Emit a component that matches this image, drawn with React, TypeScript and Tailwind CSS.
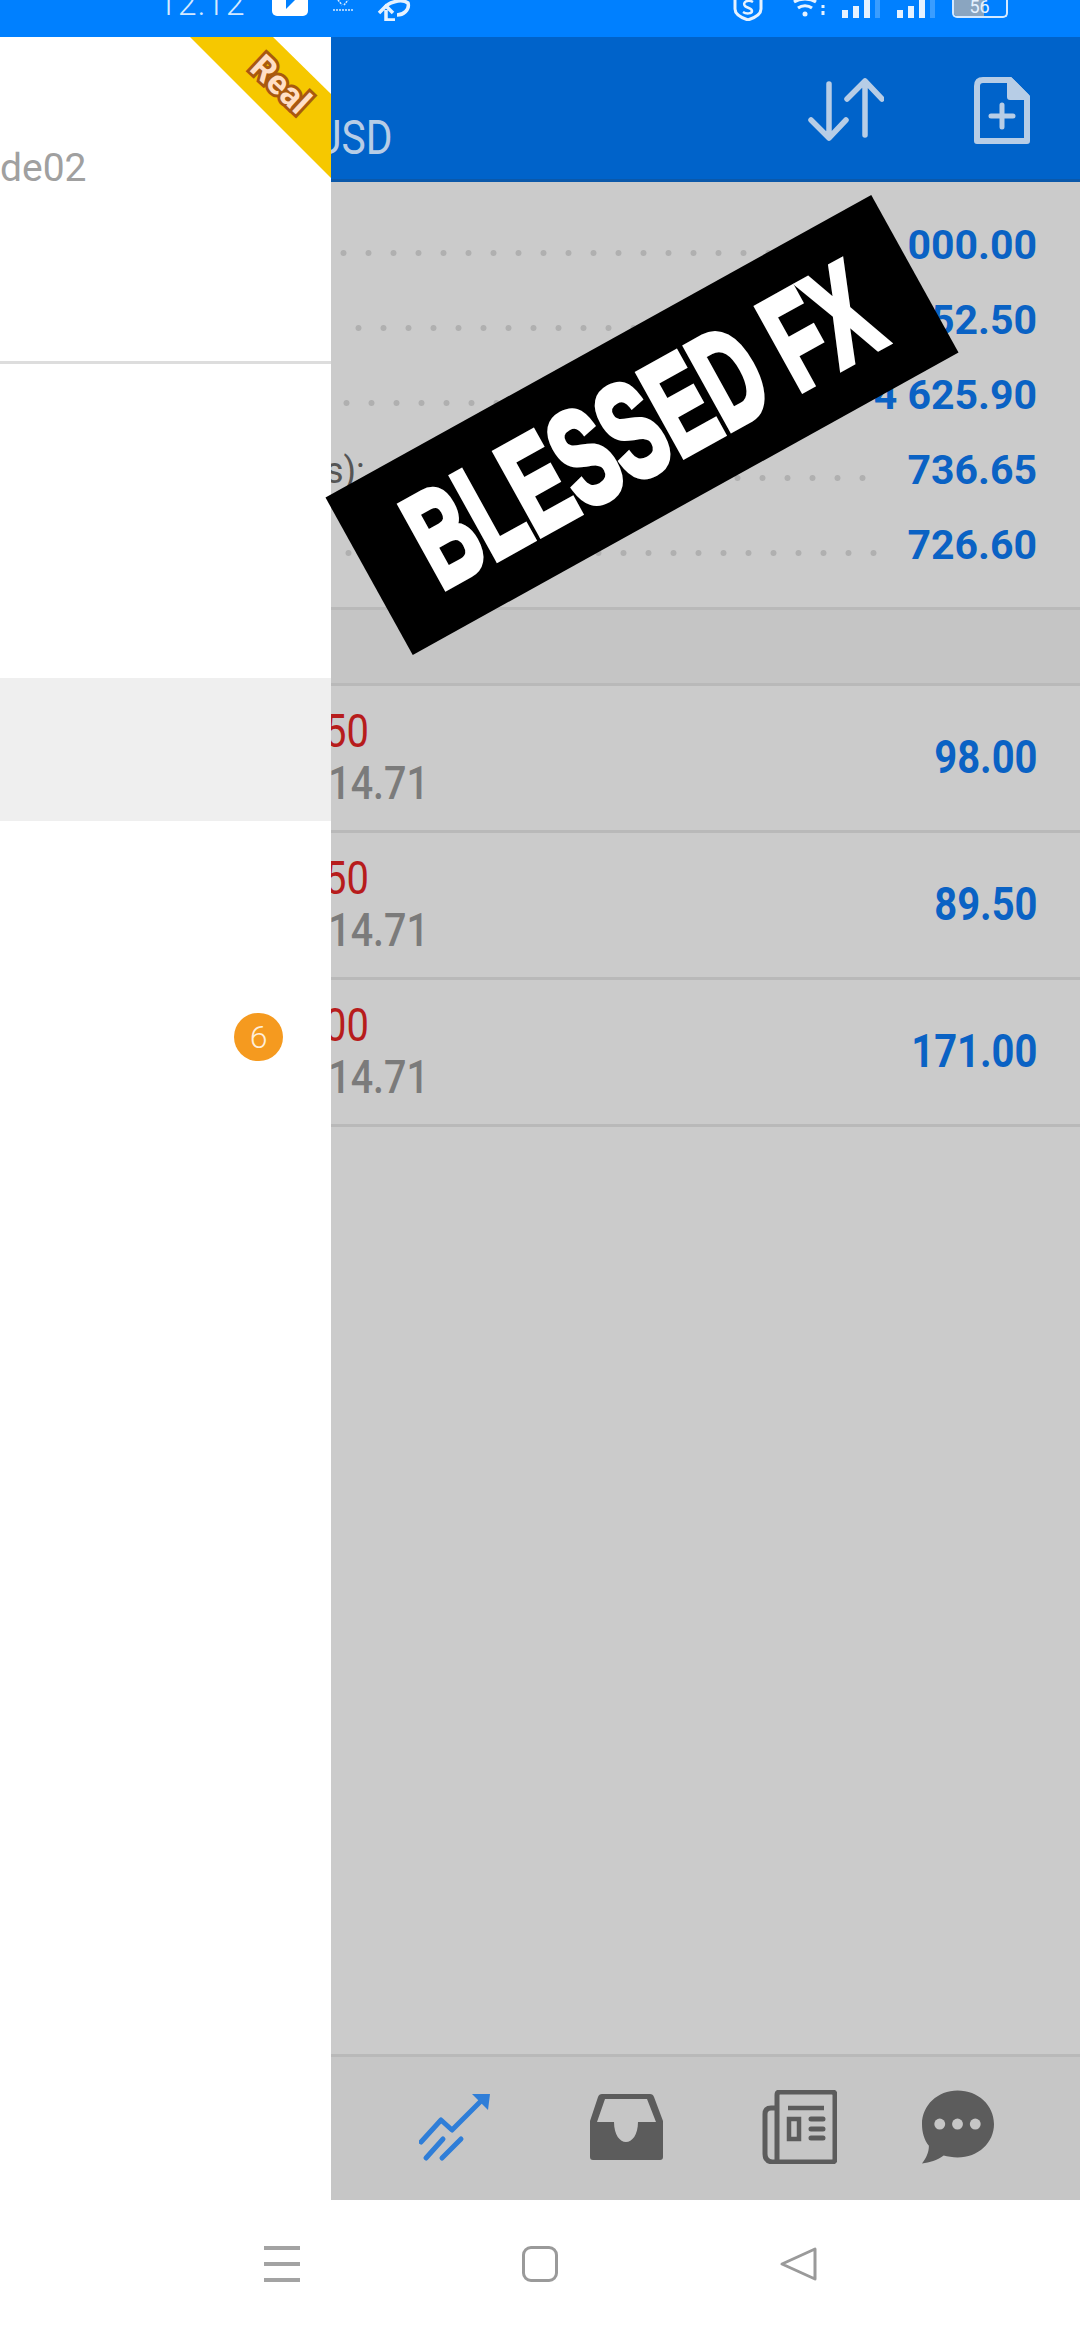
import React from 'react';

// summary rows, the left part of each sits under the drawer
const summary = [
  { value: '000.00', label: '', dots: 'ml-[0px] mr-[20px]' },
  { value: '52.50', label: '', dots: 'ml-[15px] mr-[20px]' },
  { value: '4 625.90', label: '', dots: 'ml-[3px] mr-[20px]' },
  { value: '736.65', label: 's):', dots: 'ml-[10px] mr-[40px]' },
  { value: '726.60', label: '', dots: 'ml-[5px] mr-[28px]' },
];

const positions = [
  { price: '50', value: '98.00' },
  { price: '50', value: '89.50' },
  { price: '00', value: '171.00' },
];

const StatusBar = () => (
  <div className="flex h-[37px] items-start overflow-hidden bg-[#0080ff] pl-[158px] text-[#d4e9ff]">
    <span className="-mt-[14px] text-[34px] leading-[34px] font-light tracking-[1px]">12:12</span>
    <svg className="ml-[26px]" width="36" height="16" viewBox="0 0 36 16">
      <rect x="0" y="-12" width="36" height="28" rx="5" fill="#fff" />
      <path d="M14 0 L23 0 L14 9 Z" fill="#0080ff" />
    </svg>
    <svg className="ml-[22px]" width="26" height="13" viewBox="0 0 26 13" fill="none" stroke="#d4e9ff" strokeWidth="1.5">
      <path d="M8 0 L12 5 M14 5 L18 0 M3 10 H23" strokeDasharray="2 1" />
    </svg>
    <svg className="ml-[21px]" width="34" height="21" viewBox="0 0 34 21" fill="none" stroke="#e6f2ff" strokeWidth="3.5">
      <path d="M8 8 C10 3 24 -2 31 3 C33 10 26 15 20 15" />
      <path d="M2 13 L9 6 L16 13 M9 10 V20 H18" />
    </svg>
    <svg className="ml-[322px]" width="30" height="21" viewBox="0 0 30 21" fill="none" stroke="#e6f2ff" strokeWidth="3">
      <path d="M2 0 V9 C2 14 9 18 15 20 C21 18 28 14 28 9 V0" />
      <path d="M20 2 C15 -1 9 2 12 6 C14 8 19 8 19 11 C19 14 13 14 10 12" strokeWidth="2.5" />
    </svg>
    <svg className="ml-[29px]" width="34" height="18" viewBox="0 0 34 18" fill="none" stroke="#e6f2ff" strokeWidth="3">
      <path d="M2 2 C8 -2 18 -2 24 2 M6 8 C10 5 16 5 20 8" />
      <circle cx="13" cy="14" r="2.5" fill="#e6f2ff" stroke="none" />
      <path d="M31 5 V8 M31 11 V15" />
    </svg>
    <svg className="ml-[15px]" width="40" height="18" viewBox="0 0 40 18" fill="#e6f2ff">
      <rect x="1" y="10" width="6" height="8" />
      <rect x="12" y="6" width="6" height="12" />
      <rect x="23" y="0" width="6" height="18" />
      <rect x="34" y="0" width="5" height="18" opacity="0.25" />
    </svg>
    <svg className="ml-[15px]" width="40" height="18" viewBox="0 0 40 18" fill="#e6f2ff">
      <rect x="1" y="10" width="6" height="8" />
      <rect x="12" y="6" width="6" height="12" />
      <rect x="23" y="0" width="6" height="18" />
      <rect x="34" y="0" width="5" height="18" opacity="0.25" />
    </svg>
    <div className="relative ml-[16px] flex h-[18px] w-[56px] items-end justify-center overflow-hidden rounded-b-[5px] border-x-[2px] border-b-[2px] border-[#d4e9ff]">
      <div className="absolute left-0 top-0 h-full w-[30px] bg-[#8aa5c0]" />
      <span className="relative -mb-[2px] text-[18px] leading-[22px] text-[#e6f2ff]">56</span>
    </div>
  </div>
);

const Header = () => (
  <div className="flex h-[145px] items-start border-b-[3px] border-[#0a58aa] bg-[#0063ca] pr-[50px] text-[#b7cde6]">
    <span className="mt-[73px] ml-[315px] inline-block origin-left scale-x-[0.85] text-[48px] leading-[56px]">USD</span>
    <svg className="mt-[41px] ml-auto" width="76" height="64" viewBox="0 0 76 64" fill="none" stroke="#b7cde6" strokeWidth="5.5" strokeLinecap="round" strokeLinejoin="round">
      <path d="M21 6 V60 M3 42 L21 60 L38 42" />
      <path d="M57 57 V3 M39 21 L57 3 L74 21" />
    </svg>
    <svg className="mt-[40px] ml-[90px]" width="56" height="67" viewBox="0 0 56 67" fill="none" stroke="#b7cde6" strokeWidth="6" strokeLinejoin="round">
      <path d="M36 3 H9 Q3 3 3 9 V64 H53 V20 Z" />
      <path d="M36 3 V20 H53 Z" fill="#b7cde6" />
      <path d="M28 28 V50 M17 39 H39" strokeWidth="5" strokeLinecap="round" />
    </svg>
  </div>
);

const SummaryRow = ({ value, label, dots }: { value: string; label: string; dots: string }) => (
  <div className="flex h-[75px] items-center pr-[43px] pl-[331px]">
    {label && <span className="-ml-[6px] text-[36px] leading-none text-[#555555]">{label}</span>}
    <div
      className={`mt-[14px] h-[8px] flex-1 bg-[radial-gradient(circle,#b0b0b0_2.5px,transparent_3.5px)] bg-[length:25px_8px] ${dots}`}
    />
    <span className="text-[41px] leading-none font-bold text-[#0a62c4]">{value}</span>
  </div>
);

const PositionRow = ({ price, value }: { price: string; value: string }) => (
  <div className="flex h-[147px] items-center justify-between border-b-[3px] border-[#b9b9b9] pr-[43px] pl-[331px]">
    <div className="flex w-[98px] flex-col pb-[2px] text-[47px] leading-[52px]">
      <span className="mr-[60px] inline-block origin-right scale-x-[0.85] self-end text-[#b71c1c]">{price}</span>
      <span className="inline-block origin-right scale-x-[0.84] self-end font-medium text-[#7b7b7b]">14.71</span>
    </div>
    <span className="inline-block origin-right scale-x-[0.85] pb-[2px] text-[47px] leading-[52px] font-bold text-[#0a62c4]">
      {value}
    </span>
  </div>
);

const TabIcons = () => (
  <div className="flex h-[146px] items-center border-t-[3px] border-[#b9b9b9] bg-[#c6c6c6] pb-[4px] pl-[419px]">
    <svg width="72" height="70" viewBox="0 0 72 70" fill="none" stroke="#2f7ed8" strokeWidth="5" strokeLinecap="round" strokeLinejoin="round">
      <path d="M2 50 L22 28 L33 38 L63 8" />
      <path d="M7 66 L24 47 M23 66 L42 47" />
      <path d="M53 2 L71 2 L69 18 Z" fill="#2f7ed8" stroke="none" />
    </svg>
    <svg className="ml-[99px]" width="73" height="67" viewBox="0 0 73 67">
      <path
        fillRule="evenodd"
        fill="#5c5c5c"
        d="M12 1 H60 Q63 1 64 4 L73 28 V64 Q73 67 70 67 H3 Q0 67 0 64 V28 L8 4 Q9 1 12 1 Z M15 6 L7 29 H24 C24 42 30 49 36 49 C42 49 48 42 48 29 H66 L57 6 Z"
      />
    </svg>
    <svg className="ml-[98px]" width="76" height="74" viewBox="0 0 76 74" fill="none" stroke="#5c5c5c" strokeWidth="5">
      <path d="M16 72 H71 Q74 72 74 69 V5 Q74 2 71 2 H19 Q16 2 16 5 V72 Z" />
      <path d="M16 18 H10 Q4 18 4 24 V64 Q4 71 11 72 H16" />
      <path d="M27 18 H63" strokeWidth="4.5" />
      <rect x="28" y="29" width="10" height="20" strokeWidth="4.5" />
      <path d="M50 29 H62 M50 39 H62 M50 48 H62" strokeWidth="5" strokeLinecap="round" />
    </svg>
    <svg className="ml-[85px]" width="72" height="74" viewBox="0 0 73 74">
      <path fill="#5c5c5c" d="M36 0 C57 0 73 15 73 34 C73 53 57 68 36 68 C31 68 26 67 22 66 C15 71 8 73 0 74 C4 69 7 63 7 56 C2 50 0 42 0 34 C0 15 16 0 36 0 Z" />
      <circle cx="18" cy="34" r="5.5" fill="#c6c6c6" />
      <circle cx="36" cy="34" r="5.5" fill="#c6c6c6" />
      <circle cx="54" cy="34" r="5.5" fill="#c6c6c6" />
    </svg>
  </div>
);

const Drawer = () => (
  <aside className="absolute top-0 bottom-0 left-0 flex w-[331px] flex-col overflow-hidden bg-white">
    <div className="h-[327px] border-b-[3px] border-[#dddddd] pt-[109px] text-[39px] leading-[44px] text-[#a0a0a0]">
      <span className="block">de02</span>
    </div>
    <div className="mt-[314px] h-[143px] bg-[#efefef]" />
    <div className="mt-[192px] ml-[234px] flex h-[48px] w-[49px] items-center justify-center rounded-full bg-[#f59a1f] text-[32px] leading-none font-light text-[#ffeeda]">
      6
    </div>
    {/* corner ribbon */}
    <div className="absolute top-0 left-[190px] h-[141px] w-[141px] bg-[#f6c800] [clip-path:polygon(0_0,83px_0,141px_57px,141px_141px)]" />
    <span className="absolute top-[27px] left-[235px] w-[92px] rotate-[43deg] text-center text-[34px] leading-[40px] font-bold text-[#ffdfc6] [-webkit-text-stroke:6px_#a9590f] [paint-order:stroke_fill]">
      Real
    </span>
  </aside>
);

const Banner = () => (
  <div className="absolute top-[298px] left-[330px] flex h-[180px] w-[624px] -rotate-[29deg] items-center justify-center overflow-hidden bg-black">
    <span className="inline-block scale-x-[0.6] text-[136px] leading-none font-bold whitespace-nowrap text-white [-webkit-text-stroke:7px_#ffffff] [font-family:'Liberation_Sans',sans-serif]">
      BLESSED FX
    </span>
  </div>
);

const Nav = () => (
  <div className="flex flex-1 items-center gap-[222px] bg-white pb-[4px] pl-[264px]">
    <div className="flex h-[36px] w-[36px] flex-col justify-between">
      <div className="h-[4px] bg-[#a3a3a3]" />
      <div className="h-[4px] bg-[#a3a3a3]" />
      <div className="h-[4px] bg-[#a3a3a3]" />
    </div>
    <div className="h-[36px] w-[36px] rounded-[9px] border-[3px] border-[#9a9a9a]" />
    <svg width="37" height="34" viewBox="0 0 37 34" fill="none" stroke="#9a9a9a" strokeWidth="3" strokeLinejoin="round">
      <path d="M35 2 V32 L2 17 Z" />
    </svg>
  </div>
);

export default function App() {
  return (
    <div className="flex h-[2331px] w-[1080px] flex-col overflow-hidden bg-white [font-family:Roboto,sans-serif]">
      <StatusBar />
      <div className="relative flex h-[2163px] flex-col bg-[#cbcbcb]">
        <Header />
        <div className="border-b-[3px] border-[#b9b9b9] pt-[26px] pb-[24px]">
          {summary.map((row) => (
            <SummaryRow key={row.value} {...row} />
          ))}
        </div>
        <div className="h-[76px] border-b-[3px] border-[#b9b9b9] bg-[#c5c5c5]" />
        {positions.map((row) => (
          <PositionRow key={row.value} {...row} />
        ))}
        <div className="flex-1" />
        <TabIcons />
        <Drawer />
        <Banner />
      </div>
      <Nav />
    </div>
  );
}
